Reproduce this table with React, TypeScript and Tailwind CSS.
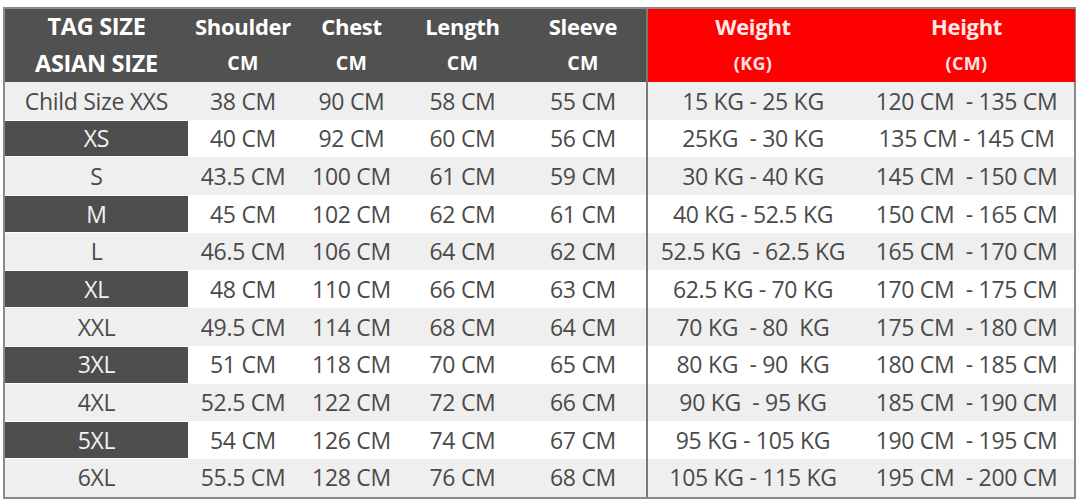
import React from "react";

const rows: [string, string, string, string, string, string, string][] = [
  ["Child Size XXS", "38 CM", "90 CM", "58 CM", "55 CM", "15 KG - 25 KG", "120 CM  - 135 CM"],
  ["XS", "40 CM", "92 CM", "60 CM", "56 CM", "25KG  - 30 KG", "135 CM - 145 CM"],
  ["S", "43.5 CM", "100 CM", "61 CM", "59 CM", "30 KG - 40 KG", "145 CM  - 150 CM"],
  ["M", "45 CM", "102 CM", "62 CM", "61 CM", "40 KG - 52.5 KG", "150 CM  - 165 CM"],
  ["L", "46.5 CM", "106 CM", "64 CM", "62 CM", "52.5 KG  - 62.5 KG", "165 CM  - 170 CM"],
  ["XL", "48 CM", "110 CM", "66 CM", "63 CM", "62.5 KG - 70 KG", "170 CM  - 175 CM"],
  ["XXL", "49.5 CM", "114 CM", "68 CM", "64 CM", "70 KG  - 80  KG", "175 CM  - 180 CM"],
  ["3XL", "51 CM", "118 CM", "70 CM", "65 CM", "80 KG  - 90  KG", "180 CM  - 185 CM"],
  ["4XL", "52.5 CM", "122 CM", "72 CM", "66 CM", "90 KG  - 95 KG", "185 CM  - 190 CM"],
  ["5XL", "54 CM", "126 CM", "74 CM", "67 CM", "95 KG - 105 KG", "190 CM  - 195 CM"],
  ["6XL", "55.5 CM", "128 CM", "76 CM", "68 CM", "105 KG - 115 KG", "195 CM  - 200 CM"],
];

const cols = "grid grid-cols-[183px_110px_107px_115px_126px_2px_210px_217px]";

export default function App() {
  return (
    <div
      className="w-[1080px] h-[503px] bg-white pt-[7px] pl-[3px]"
      style={{ fontFamily: '"Open Sans", "Liberation Sans", sans-serif' }}
    >
      <div className="w-[1073px] border-2 border-[#8a8a8a] bg-white">
        {/* Header */}
        <div className={`${cols} h-[73px] text-white font-bold`}>
          {[
            ["TAG SIZE", "ASIAN SIZE", true],
            ["Shoulder", "CM", false],
            ["Chest", "CM", false],
            ["Length", "CM", false],
            ["Sleeve", "CM", false],
          ].map(([a, b, big], i) => (
            <div key={i} className="bg-[#515151] flex flex-col items-center pt-[2px]">
              <div className={`${big ? "text-[23.5px]" : "text-[22px]"} leading-[30px] tracking-[-0.3px]`}>{a as string}</div>
              <div className={`mt-[5px] ${big ? "text-[23.5px] leading-[34px] tracking-[-0.3px]" : "text-[19.5px] leading-[34px] tracking-[0.3px]"}`}>{b as string}</div>
            </div>
          ))}
          <div className="bg-[#7a7a7a]" />
          {[
            ["Weight", "(KG)"],
            ["Height", "(CM)"],
          ].map(([a, b], i) => (
            <div key={i} className="bg-[#ff0000] flex flex-col items-center pt-[2px]">
              <div className="text-[22px] leading-[30px] tracking-[-0.3px] text-[#fde8e8]">{a}</div>
              <div className="mt-[5px] text-[18px] leading-[34px] tracking-[0.3px] text-[#fbe3e3]">{b}</div>
            </div>
          ))}
        </div>
        {/* Body */}
        {rows.map((r, i) => {
          const dark = i % 2 === 1;
          return (
            <div
              key={i}
              className={`${cols} h-[37.7px] text-[23px] text-[#4a4a4a] tracking-[-0.3px] ${dark ? "bg-white" : "bg-[#efefef]"}`}
            >
              <div className="flex items-stretch py-[1px]">
                <div
                  className={`flex-1 flex items-center justify-center ${dark ? "bg-[#4e4e4e] text-[#f2f2f2]" : ""}`}
                >
                  {r[0]}
                </div>
              </div>
              {r.slice(1, 5).map((c, j) => (
                <div key={j} className="flex items-center justify-center whitespace-pre">
                  {c}
                </div>
              ))}
              <div className="bg-[#7a7a7a]" />
              {r.slice(5).map((c, j) => (
                <div key={j} className="flex items-center justify-center whitespace-pre">
                  {c}
                </div>
              ))}
            </div>
          );
        })}
      </div>
    </div>
  );
}
